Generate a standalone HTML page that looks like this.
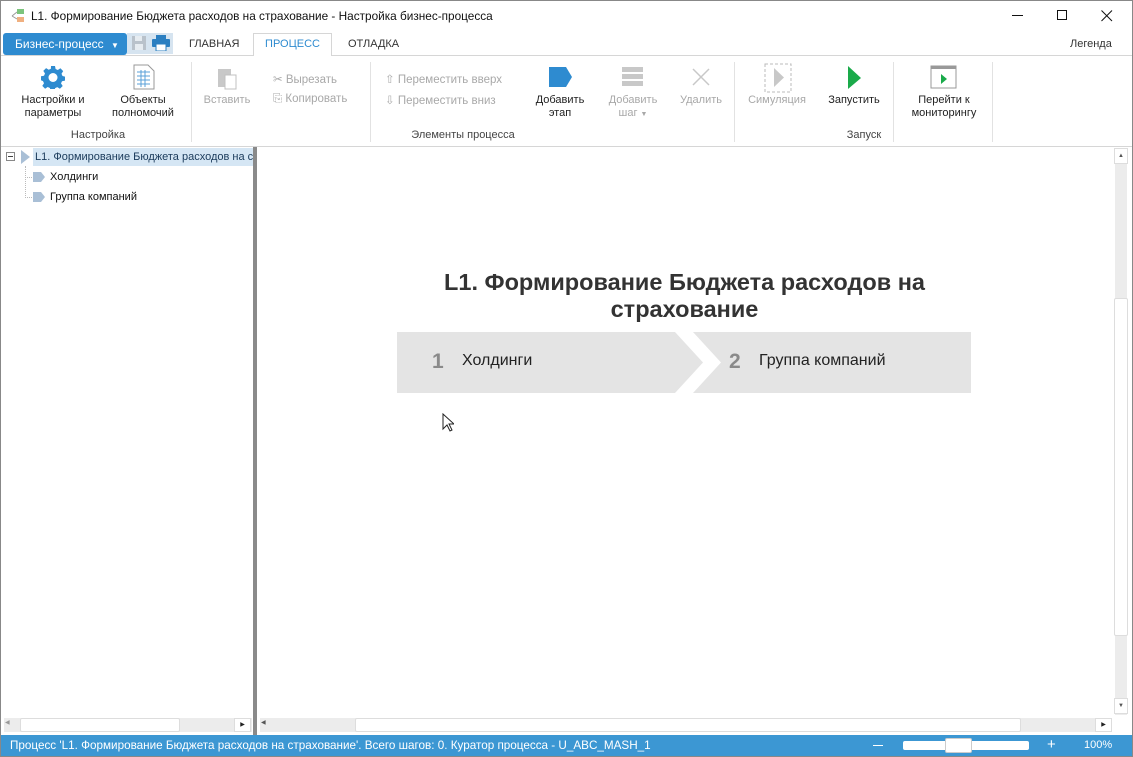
<!DOCTYPE html>
<html><head><meta charset="utf-8"><style>
*{margin:0;padding:0;box-sizing:border-box}
body{width:1133px;height:757px;position:relative;overflow:hidden;background:#fff;font-family:"Liberation Sans",sans-serif;font-size:11px;color:#222}
.a{position:absolute}
.lbl{position:absolute;width:100px;margin-left:-50px;text-align:center;font-size:11px;line-height:13px;color:#222;white-space:nowrap}
.dis{color:#a8a8a8}
.sep{position:absolute;top:62px;width:1px;height:80px;background:#e2e2e2}
.grp{position:absolute;top:129px;width:160px;margin-left:-80px;font-size:11px;color:#444;text-align:center}
</style></head><body>
<div class="a" style="left:0;top:0;width:1133px;height:757px;border:1px solid #888;pointer-events:none;z-index:9"></div>
<!-- title -->
<svg class="a" style="left:11px;top:9px" width="16" height="14"><rect x="6" y="0" width="7" height="5" fill="#7cc47c"/><rect x="6" y="8" width="7" height="5" fill="#f0b080"/><path d="M1 7 L6 3 M1 7 L6 10" stroke="#999" fill="none"/></svg>
<div class="a" style="left:31px;top:9px;font-size:11.8px;color:#111">L1. Формирование Бюджета расходов на страхование - Настройка бизнес-процесса</div>
<div class="a" style="left:1012px;top:15px;width:11px;height:1px;background:#111"></div>
<div class="a" style="left:1057px;top:10px;width:10px;height:10px;border:1px solid #111"></div>
<svg class="a" style="left:1101px;top:10px" width="12" height="12"><path d="M0.5 0.5L11 11M11 0.5L0.5 11" stroke="#111"/></svg>
<!-- tabs row -->
<div class="a" style="left:3px;top:33px;width:124px;height:22px;background:#2e8bd0;border-radius:3px;color:#fff;font-size:12px;line-height:22px;padding-left:12px">Бизнес-процесс <span style="font-size:8px;margin-left:4px">▼</span></div>
<div class="a" style="left:127px;top:33px;width:46px;height:21px;background:#d6e4f0"></div>
<svg class="a" style="left:131px;top:35px" width="16" height="16"><rect x="1" y="1" width="14" height="14" fill="#b9c2cb"/><rect x="4" y="1" width="7" height="5" fill="#e6ecf1"/><rect x="4" y="9" width="8" height="6" fill="#e6ecf1"/></svg>
<svg class="a" style="left:152px;top:35px" width="18" height="16"><rect x="4" y="0" width="10" height="4" fill="#2b7fc1"/><rect x="0" y="4" width="18" height="8" rx="1" fill="#2b7fc1"/><rect x="4" y="9" width="10" height="7" fill="#fff" stroke="#2b7fc1"/></svg>
<div class="a" style="left:189px;top:38px;font-size:11px;color:#333">ГЛАВНАЯ</div>
<div class="a" style="left:253px;top:33px;width:79px;height:23px;background:#fff;border:1px solid #d6d6d6;border-bottom:none;color:#2e8bd0;text-align:center;line-height:21px;font-size:11px;z-index:2">ПРОЦЕСС</div>
<div class="a" style="left:348px;top:38px;font-size:11px;color:#333">ОТЛАДКА</div>
<div class="a" style="left:1070px;top:38px;font-size:11px;color:#333">Легенда</div>
<div class="a" style="left:0;top:55px;width:1133px;height:1px;background:#d6d6d6"></div>
<!-- ribbon -->
<svg class="a" style="left:41px;top:65px" width="24" height="24" viewBox="0 0 24 24"><path fill="#2e8bd0" d="M10 1h4l.6 3 2.2 1 2.6-1.7 2.8 2.8L20.5 8.7l1 2.3 2.5.6v4l-3 .6-1 2.2 1.7 2.6-2.8 2.8-2.6-1.7-2.2 1-.6 2.9h-4l-.6-3-2.2-1-2.6 1.7-2.8-2.8 1.7-2.6-1-2.2L0 15.3v-4l3-.6 1-2.2L2.3 5.9 5.1 3.1l2.6 1.7 2.2-1z"/><circle cx="12" cy="12.5" r="4.5" fill="#fff"/></svg>
<div class="lbl" style="left:53px;top:94px">Настройки и<br>параметры</div>
<svg class="a" style="left:133px;top:64px" width="22" height="26"><path d="M1 1h14l6 6v18H1z" fill="#fff" stroke="#999"/><g stroke="#5aa0d8"><path d="M4 8h13M4 12h13M4 16h13M4 20h13M8 6v17M12 6v17"/></g></svg>
<div class="lbl" style="left:143px;top:94px">Объекты<br>полномочий</div>
<div class="grp" style="left:98px">Настройка</div>
<div class="sep" style="left:191px"></div>
<svg class="a" style="left:217px;top:66px" width="22" height="24"><rect x="1" y="3" width="13" height="18" fill="#c8c8c8"/><rect x="8" y="9" width="11" height="14" fill="#fff" stroke="#c0c0c0"/></svg>
<div class="lbl dis" style="left:227px;top:94px">Вставить</div>
<div class="a dis" style="left:273px;top:72px;font-size:11.5px">✂ Вырезать</div>
<div class="a dis" style="left:273px;top:93px;font-size:11.5px">⎘ Копировать</div>
<div class="sep" style="left:370px"></div>
<div class="a dis" style="left:385px;top:72px;font-size:11.5px">⇧ Переместить вверх</div>
<div class="a dis" style="left:385px;top:93px;font-size:11.5px">⇩ Переместить вниз</div>
<svg class="a" style="left:549px;top:67px" width="24" height="20"><path d="M0 0h17l6 10-6 10H0z" fill="#2e8bd0"/></svg>
<div class="lbl" style="left:560px;top:94px">Добавить<br>этап</div>
<svg class="a" style="left:622px;top:67px" width="22" height="20"><rect y="0" width="21" height="5" fill="#c8c8c8"/><rect y="7" width="21" height="5" fill="#c8c8c8"/><rect y="14" width="21" height="5" fill="#c8c8c8"/></svg>
<div class="lbl dis" style="left:633px;top:94px">Добавить<br>шаг <span style="font-size:7px">▼</span></div>
<svg class="a" style="left:692px;top:68px" width="18" height="18"><path d="M1 1L17 17M17 1L1 17" stroke="#c8c8c8" stroke-width="1.5"/></svg>
<div class="lbl dis" style="left:701px;top:94px">Удалить</div>
<div class="sep" style="left:734px"></div>
<svg class="a" style="left:764px;top:63px" width="28" height="30"><rect x="1" y="1" width="26" height="28" fill="none" stroke="#bbb" stroke-dasharray="3 2"/><path d="M10 5l10 9.5L10 24z" fill="#c8c8c8"/></svg>
<div class="lbl dis" style="left:777px;top:94px">Симуляция</div>
<svg class="a" style="left:848px;top:66px" width="14" height="24"><path d="M0 0l13 12L0 23z" fill="#1aaa4a"/></svg>
<div class="lbl" style="left:854px;top:94px">Запустить</div>
<div class="sep" style="left:893px"></div>
<svg class="a" style="left:930px;top:65px" width="27" height="24"><rect x="1" y="1" width="25" height="22" fill="#fff" stroke="#999"/><rect x="1" y="1" width="25" height="3" fill="#999"/><path d="M11 9l6 5-6 5z" fill="#1aaa4a"/></svg>
<div class="lbl" style="left:944px;top:94px">Перейти к<br>мониторингу</div>
<div class="grp" style="left:463px">Элементы процесса</div>
<div class="grp" style="left:864px">Запуск</div>
<div class="sep" style="left:992px"></div>
<div class="a" style="left:0;top:146px;width:1133px;height:1px;background:#d6d6d6"></div>
<!-- left tree -->
<div class="a" style="left:253px;top:147px;width:4px;height:588px;background:#8a8a8a"></div>
<div class="a" style="left:33px;top:148px;width:220px;height:18px;background:#d5e6f4"></div>
<div class="a" style="left:6px;top:152px;width:9px;height:9px;border:1px solid #888;background:#fff"></div>
<div class="a" style="left:8px;top:156px;width:5px;height:1px;background:#444"></div>
<svg class="a" style="left:21px;top:150px" width="10" height="14"><path d="M0 0l9 7-9 7z" fill="#a9bfd6"/></svg>
<div class="a" style="left:35px;top:151px;font-size:11px;color:#1a3a5a;white-space:nowrap;width:218px;overflow:hidden">L1. Формирование Бюджета расходов на стр</div>
<div class="a" style="left:25px;top:166px;width:1px;height:32px;border-left:1px dotted #bbb"></div>
<div class="a" style="left:25px;top:177px;width:7px;border-top:1px dotted #bbb"></div>
<div class="a" style="left:25px;top:197px;width:7px;border-top:1px dotted #bbb"></div>
<svg class="a" style="left:33px;top:172px" width="13" height="10"><path d="M0 0h8l4 5-4 5H0z" fill="#a9bfd6"/></svg>
<svg class="a" style="left:33px;top:192px" width="13" height="10"><path d="M0 0h8l4 5-4 5H0z" fill="#a9bfd6"/></svg>
<div class="a" style="left:50px;top:171px;font-size:11px;color:#111">Холдинги</div>
<div class="a" style="left:50px;top:191px;font-size:11px;color:#111">Группа компаний</div>
<!-- left h scrollbar -->
<div class="a" style="left:4px;top:718px;width:248px;height:14px;background:#ececec"></div>
<div class="a" style="left:20px;top:718px;width:160px;height:14px;background:#fff;border:1px solid #ddd;border-radius:2px"></div>
<div class="a" style="left:234px;top:718px;width:17px;height:14px;background:#fff;border:1px solid #ddd;font-size:6px;text-align:center;line-height:12px">▶</div>
<div class="a" style="left:5px;top:719px;font-size:6px;color:#999">◀</div>
<!-- main -->
<div class="a" style="left:260px;top:718px;width:852px;height:14px;background:#ececec"></div>
<div class="a" style="left:355px;top:718px;width:666px;height:14px;background:#fff;border:1px solid #ddd;border-radius:2px"></div>
<div class="a" style="left:1095px;top:718px;width:17px;height:14px;background:#fff;border:1px solid #ddd;font-size:6px;text-align:center;line-height:12px">▶</div>
<div class="a" style="left:261px;top:719px;font-size:6px;color:#555">◀</div>
<div class="a" style="left:1115px;top:150px;width:12px;height:565px;background:#ececec"></div>
<div class="a" style="left:1114px;top:148px;width:14px;height:16px;background:#fff;border:1px solid #ddd;font-size:6px;text-align:center;line-height:14px;color:#555">▲</div>
<div class="a" style="left:1114px;top:298px;width:14px;height:338px;background:#fff;border:1px solid #ddd;border-radius:2px"></div>
<div class="a" style="left:1114px;top:698px;width:14px;height:16px;background:#fff;border:1px solid #ddd;font-size:6px;text-align:center;line-height:14px;color:#555">▼</div>
<div class="a" style="left:368px;top:269px;width:633px;text-align:center;font-size:23.5px;font-weight:bold;color:#333;line-height:27px">L1. Формирование Бюджета расходов на<br>страхование</div>
<svg class="a" style="left:397px;top:332px" width="575" height="62"><path d="M0 0H278L306 30.5 278 61H0z" fill="#e4e4e4"/><path d="M296 0H574V61H296L324 30.5z" fill="#e4e4e4"/></svg>
<div class="a" style="left:432px;top:350px;font-size:21px;font-weight:bold;color:#8a8a8a">1</div>
<div class="a" style="left:462px;top:352px;font-size:16px;color:#222">Холдинги</div>
<div class="a" style="left:729px;top:350px;font-size:21px;font-weight:bold;color:#8a8a8a">2</div>
<div class="a" style="left:759px;top:352px;font-size:16px;color:#222">Группа компаний</div>
<svg class="a" style="left:442px;top:413px" width="12" height="19"><path d="M1 1v15l4-4 3 6 2-1-3-6h5z" fill="#fff" stroke="#222"/></svg>
<!-- status -->
<div class="a" style="left:0;top:735px;width:1133px;height:22px;background:#3c97d3"></div>
<div class="a" style="left:10px;top:739px;font-size:11.7px;color:#fff">Процесс 'L1. Формирование Бюджета расходов на страхование'. Всего шагов: 0. Куратор процесса - U_ABC_MASH_1</div>
<div class="a" style="left:873px;top:745px;width:10px;height:1px;background:#fff"></div>
<div class="a" style="left:903px;top:741px;width:126px;height:9px;background:#fff;border-radius:2px"></div>
<div class="a" style="left:945px;top:738px;width:27px;height:15px;background:#fff;border:1px solid #ccc;border-radius:2px"></div>
<div class="a" style="left:1047px;top:736px;font-size:15px;color:#fff">+</div>
<div class="a" style="left:1084px;top:739px;font-size:11px;color:#fff">100%</div>
</body></html>
